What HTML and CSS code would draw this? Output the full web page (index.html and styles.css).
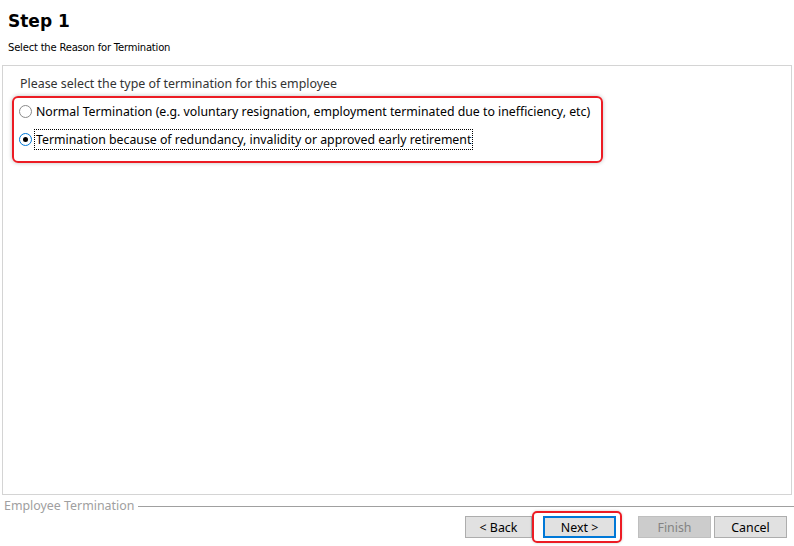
FILE: index.html
```html
<!DOCTYPE html>
<html lang="en">
<head>
    <meta charset="UTF-8">
    <title>Employee Termination</title>
    <link rel="stylesheet" href="styles.css">
</head>
<body>
    <div class="wizard">
        <div class="wizard-header">
            <h1>Step 1</h1>
            <p class="subtitle">Select the Reason for Termination</p>
        </div>

        <div class="wizard-body">
            <p class="prompt">Please select the type of termination for this employee</p>
            <div class="choices">
                <label class="choice">
                    <span class="radio"></span>
                    <span class="choice-text">Normal Termination (e.g. voluntary resignation, employment terminated due to inefficiency, etc)</span>
                </label>
                <label class="choice">
                    <span class="radio checked"></span>
                    <span class="choice-text focused">Termination because of redundancy, invalidity or approved early retirement</span>
                </label>
            </div>
        </div>

        <div class="wizard-footer">
            <div class="group-title">
                <span>Employee Termination</span>
                <span class="group-line"></span>
            </div>
            <div class="buttons">
                <button class="btn btn-back">&lt; Back</button>
                <span class="highlight">
                    <button class="btn btn-default">Next &gt;</button>
                </span>
                <button class="btn" disabled>Finish</button>
                <button class="btn">Cancel</button>
            </div>
        </div>
    </div>
</body>
</html>
```

FILE: styles.css
```css
* {
    box-sizing: border-box;
}

body {
    margin: 0;
    background: #ffffff;
    font-family: 'Noto Sans', 'Open Sans', sans-serif;
    color: #000;
}

.wizard {
    width: 794px;
    height: 546px;
    display: flex;
    flex-direction: column;
}

.wizard-header {
    height: 65px;
    padding: 9px 8px 0;
}

.wizard-header h1 {
    margin: 0;
    font-family: 'DejaVu Sans', Verdana, sans-serif;
    font-size: 17px;
    font-weight: bold;
    line-height: 24px;
}

.subtitle {
    margin: 8px 0 0;
    font-family: 'DejaVu Sans', Verdana, sans-serif;
    font-size: 10px;
    line-height: 14px;
    letter-spacing: -0.2px;
}

.wizard-body {
    margin: 0 2px;
    height: 430px;
    border: 1px solid #d4d4d4;
    padding: 9px 9px 0;
}

.prompt {
    margin: 0 0 0 8px;
    font-size: 12.4px;
    line-height: 18px;
    color: #333;
}

.choices {
    margin-top: 3px;
    width: 591px;
    height: 67px;
    border: 2px solid #ec1c24;
    border-radius: 6px;
    box-shadow: 0 0 4px rgba(0, 0, 0, 0.25);
    padding: 3px 0 0 5px;
    display: flex;
    flex-direction: column;
    gap: 7px;
}

.choice {
    display: flex;
    align-items: center;
    gap: 2px;
    font-size: 12.3px;
    line-height: 19px;
    white-space: nowrap;
}

.radio {
    width: 13px;
    height: 13px;
    border: 1px solid #8a8a8a;
    border-radius: 50%;
    background: #fff;
    flex: none;
    position: relative;
}

.radio.checked {
    border-color: #0078d7;
}

.radio.checked::after {
    content: '';
    position: absolute;
    left: 3px;
    top: 3px;
    width: 5px;
    height: 5px;
    border-radius: 50%;
    background: #000;
}

.choice-text {
    padding: 0 1px;
    border: 1px dotted transparent;
}

.choice-text.focused {
    border-color: #000;
}

.wizard-footer {
    padding-top: 3px;
}

.group-title {
    display: flex;
    align-items: center;
    gap: 4px;
    padding-left: 4px;
    font-size: 12.4px;
    line-height: 16px;
    color: #a0a0a0;
}

.group-line {
    flex: 1;
    height: 1px;
    background: #a0a0a0;
}

.buttons {
    display: flex;
    align-items: center;
    padding: 2px 0 0 465px;
}

.btn {
    width: 73px;
    height: 22px;
    padding: 0;
    font-family: 'Noto Sans', 'Open Sans', sans-serif;
    font-size: 12.4px;
    color: #000;
    background: #e1e1e1;
    border: 1px solid #adadad;
}

.btn-back {
    width: 67px;
}

.btn-default {
    border: 2px solid #0078d7;
}

.btn:disabled {
    background: #cccccc;
    border-color: #bfbfbf;
    color: #838383;
}

.highlight {
    position: relative;
    margin: 0 22px 0 8px;
    display: flex;
}

.highlight::before {
    content: '';
    position: absolute;
    left: -8px;
    top: -5px;
    right: -6px;
    bottom: -5px;
    border: 2px solid #ec1c24;
    border-radius: 5px;
    box-shadow: 0 0 3px rgba(0, 0, 0, 0.2);
}

.btn:last-child {
    margin-left: 3px;
}
```
